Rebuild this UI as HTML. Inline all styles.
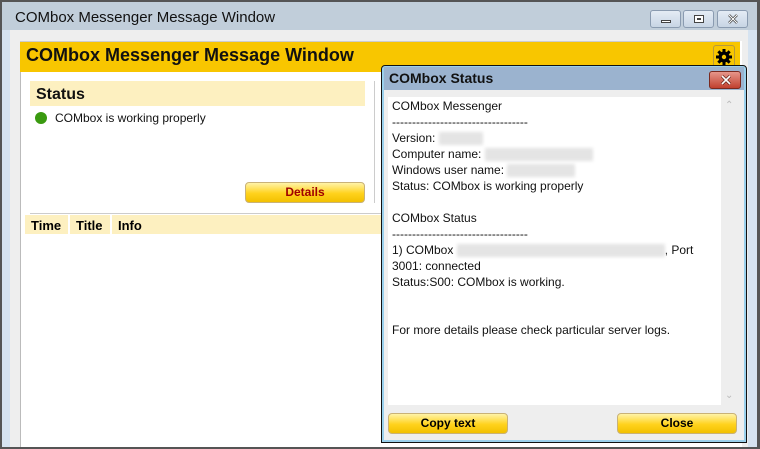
<!DOCTYPE html>
<html><head><style>
*{margin:0;padding:0;box-sizing:border-box}
body{width:760px;height:449px;overflow:hidden;background:#555;font-family:"Liberation Sans",Arial,sans-serif;position:relative}
.a{position:absolute}
.btn{position:absolute;border:1px solid #c9b277;border-radius:4px;background:linear-gradient(#fff3a8,#ffd21c 55%,#f2c000);font-weight:bold;font-size:12px;text-align:center;line-height:18px}
.tb{position:absolute;top:10px;width:31px;height:18px;border:1px solid #8a9bb0;border-radius:3px;background:linear-gradient(#e4ecf5,#c8d5e4)}
.ln{height:16px;line-height:16px;white-space:nowrap}
.bl{display:inline-block;background:#e4e4e4;filter:blur(1.5px);height:13px;vertical-align:middle}
</style></head><body>
<div class="a" style="left:2px;top:2px;width:755px;height:445px;background:#d6e3f0"></div>
<div class="a" style="left:2px;top:2px;width:755px;height:28px;background:#c1ceda"></div>
<div class="a" style="left:15px;top:9px;font-size:15px;color:#111">COMbox Messenger Message Window</div>
<div class="tb" style="left:650px"><div class="a" style="left:10px;top:9px;width:10px;height:3px;border:1px solid #444;background:#fff"></div></div>
<div class="tb" style="left:683px"><div class="a" style="left:10px;top:4px;width:10px;height:8px;border:1px solid #444;background:#fff"><div class="a" style="left:2px;top:2px;width:4px;height:2px;border:1px solid #444"></div></div></div>
<div class="tb" style="left:717px"><svg class="a" style="left:9px;top:3px" width="12" height="10" viewBox="0 0 12 10"><path d="M2 1L10 9M10 1L2 9" stroke="#444" stroke-width="2.5"/><path d="M2 1L10 9M10 1L2 9" stroke="#fff" stroke-width="1"/></svg></div>
<div class="a" style="left:10px;top:30px;width:738px;height:417px;background:#eeeeee"></div>
<div class="a" style="left:20px;top:41px;width:722px;height:406px;background:#fff;border-left:1px solid #bbb"></div>
<div class="a" style="left:20px;top:41px;width:720px;height:31px;background:#f8c600;border-top:1px solid #ccc"></div>
<div class="a" style="left:26px;top:45px;font-size:18px;font-weight:bold;color:#111">COMbox Messenger Message Window</div>
<div class="a" style="left:713px;top:45px;width:22px;height:23px;border:1px solid #b89a3a;border-radius:3px;background:#f8c600">
<svg class="a" style="left:2px;top:3px" width="16" height="16" viewBox="0 0 16 16"><g fill="#000"><circle cx="8" cy="8" r="5.5"/><rect x="6.5" y="0" width="3" height="16"/><rect x="0" y="6.5" width="16" height="3"/><rect x="6.5" y="0" width="3" height="16" transform="rotate(45 8 8)"/><rect x="6.5" y="0" width="3" height="16" transform="rotate(-45 8 8)"/></g><circle cx="8" cy="8" r="2.2" fill="#f8c600"/></svg></div>
<div class="a" style="left:30px;top:81px;width:335px;height:25px;background:#fdf0c0"></div>
<div class="a" style="left:36px;top:86px;font-size:16px;font-weight:bold;color:#111">Status</div>
<div class="a" style="left:35px;top:112px;width:12px;height:12px;border-radius:50%;background:#3a9a10"></div>
<div class="a" style="left:55px;top:111px;font-size:12px;color:#111">COMbox is working properly</div>
<div class="a" style="left:374px;top:81px;width:1px;height:122px;background:#ccc"></div>
<div class="btn" style="left:245px;top:182px;width:120px;height:21px;color:#a00000">Details</div>
<div class="a" style="left:30px;top:213px;width:352px;height:1px;background:#ccc"></div>
<div class="a" style="left:25px;top:215px;width:43px;height:19px;background:#fdf0c0"></div>
<div class="a" style="left:70px;top:215px;width:40px;height:19px;background:#fdf0c0"></div>
<div class="a" style="left:112px;top:215px;width:270px;height:19px;background:#fdf0c0"></div>
<div class="a" style="left:31px;top:218px;font-size:13px;font-weight:bold">Time</div>
<div class="a" style="left:76px;top:218px;font-size:13px;font-weight:bold">Title</div>
<div class="a" style="left:118px;top:218px;font-size:13px;font-weight:bold">Info</div>
<!-- dialog -->
<div class="a" style="left:381px;top:65px;width:366px;height:378px;background:#eeeeee;border:1px solid #111;border-radius:4px 4px 0 0;box-shadow:inset 0 0 0 2px #9ad0ec"></div>
<div class="a" style="left:384px;top:67px;width:360px;height:23px;background:#9bb3cf"></div>
<div class="a" style="left:389px;top:70px;font-size:14px;font-weight:bold;color:#111">COMbox Status</div>
<div class="a" style="left:709px;top:71px;width:32px;height:18px;border:1px solid #7a2a20;border-radius:3px;background:linear-gradient(#e6968a,#c1402f)"><svg class="a" style="left:10px;top:3px" width="12" height="10" viewBox="0 0 12 10"><path d="M2 1L10 9M10 1L2 9" stroke="#5a1a10" stroke-width="3"/><path d="M2 1L10 9M10 1L2 9" stroke="#fff" stroke-width="1.6"/></svg></div>
<div class="a" style="left:388px;top:97px;width:333px;height:308px;background:#fff"></div>
<div class="a" style="left:725px;top:100px;color:#bbb;font-size:10px">&#8963;</div>
<div class="a" style="left:725px;top:390px;color:#bbb;font-size:10px">&#8964;</div>
<div class="a" style="left:392px;top:98px;font-size:12px;color:#111">
<div class="ln">COMbox Messenger</div>
<div class="ln">----------------------------------</div>
<div class="ln">Version: <span class="bl" style="width:44px"></span></div>
<div class="ln">Computer name: <span class="bl" style="width:108px"></span></div>
<div class="ln">Windows user name: <span class="bl" style="width:68px"></span></div>
<div class="ln">Status: COMbox is working properly</div>
<div class="ln"></div>
<div class="ln">COMbox Status</div>
<div class="ln">----------------------------------</div>
<div class="ln">1) COMbox <span class="bl" style="width:208px"></span>, Port</div>
<div class="ln">3001: connected</div>
<div class="ln">Status:S00: COMbox is working.</div>
<div class="ln"></div><div class="ln"></div>
<div class="ln">For more details please check particular server logs.</div>
</div>
<div class="btn" style="left:388px;top:413px;width:120px;height:21px">Copy text</div>
<div class="btn" style="left:617px;top:413px;width:120px;height:21px">Close</div>
</body></html>
